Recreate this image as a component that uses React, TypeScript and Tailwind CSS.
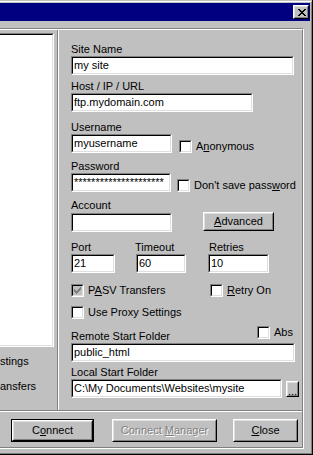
import React from "react"

// sunken 2px bevel used by edits, list boxes and check boxes
const sunkOuter = "border-t border-l border-b border-r border-t-[#808080] border-l-[#808080] border-b-white border-r-white"
const sunkInner = "border-t border-l border-b border-r border-t-black border-l-black border-b-[#dfdfdf] border-r-[#dfdfdf]"
const raisedOuter = "border-t border-l border-b border-r border-t-white border-l-white border-b-black border-r-black"
const raisedInner = "border-t border-l border-b border-r border-t-[#dfdfdf] border-l-[#dfdfdf] border-b-[#808080] border-r-[#808080]"

function Edit({ w, value }: { w: string; value?: string }) {
    return (
        <div className={`${w} h-[19px] shrink-0 ${sunkOuter}`}>
            <div className={`h-full bg-white flex items-center pl-px overflow-hidden whitespace-nowrap ${sunkInner}`}>
                {value}
            </div>
        </div>
    )
}

function CheckBox({ label, checked, disabled }: { label: React.ReactNode; checked?: boolean; disabled?: boolean }) {
    return (
        <div className="flex items-center gap-[4px] whitespace-nowrap">
            <div className={`w-[13px] h-[13px] shrink-0 ${sunkOuter}`}>
                <div className={`h-full flex items-center justify-center ${sunkInner} ${disabled ? "bg-[#c0c0c0]" : "bg-white"}`}>
                    {checked && (
                        <svg width="7" height="7" viewBox="0 0 7 7" shapeRendering="crispEdges">
                            <path
                                fill={disabled ? "#808080" : "#000"}
                                d="M6 0h1v1H6zM5 1h2v1H5zM0 2h1v1H0zM4 2h3v1H4zM0 3h2v1H0zM3 3h3v1H3zM0 4h5v1H0zM1 5h3v1H1zM2 6h1v1H2z"
                            />
                        </svg>
                    )}
                </div>
            </div>
            <span>{label}</span>
        </div>
    )
}

function Btn({ className, children, disabled }: { className: string; children: React.ReactNode; disabled?: boolean }) {
    return (
        <div className={`${className} shrink-0 ${raisedOuter}`}>
            <div className={`h-full flex items-center justify-center whitespace-nowrap ${raisedInner}`}>
                <span className={disabled ? "text-[#808080] [text-shadow:1px_1px_0_#fff]" : ""}>{children}</span>
            </div>
        </div>
    )
}

function CloseBox() {
    return (
        <div className={`w-[16px] h-[14px] bg-[#c0c0c0] ${raisedOuter}`}>
            <div className={`h-full flex items-center justify-center pl-px ${raisedInner}`}>
                <svg width="8" height="7" viewBox="0 0 8 7" shapeRendering="crispEdges">
                    <path
                        fill="#000"
                        d="M0 0h2v1H0zM6 0h2v1H6zM1 1h2v1H1zM5 1h2v1H5zM2 2h4v1H2zM3 3h2v1H3zM2 4h4v1H2zM1 5h2v1H1zM5 5h2v1H5zM0 6h2v1H0zM6 6h2v1H6z"
                    />
                </svg>
            </div>
        </div>
    )
}

const u = (c: string) => <span className="underline underline-offset-[1px]">{c}</span>

export default function App() {
    return (
        <div className="w-[313px] h-[455px] overflow-hidden bg-[#c0c0c0] border-r border-b border-r-black border-b-black pt-px font-['Liberation_Sans',Arial,sans-serif] text-[11px] leading-[13px] text-black">
            <div className="h-full flex flex-col border-t border-r border-b border-t-white border-r-[#808080] border-b-[#808080] pt-px pr-px">
                {/* title bar */}
                <div className="h-[18px] shrink-0 bg-[#000080] flex items-center justify-end pr-px">
                    <CloseBox />
                </div>

                <div className="flex-1 flex flex-col pt-[7px] pr-[6px] pb-[4px]">
                    <div className="flex-1 flex flex-col border-t border-r border-b border-t-[#808080] border-r-white border-b-white">
                        <div className="flex-1 flex flex-col border-t border-r border-b border-t-white border-r-[#808080] border-b-[#808080]">
                            <div className="flex-1 flex">
                                {/* left pane */}
                                <div className="w-[57px] shrink-0 pt-[3px] flex flex-col">
                                    <div className="w-[54px] h-[314px] border-t border-r border-b border-t-[#808080] border-r-white border-b-white">
                                        <div className="h-full bg-white border-t border-r border-b border-t-black border-r-[#dfdfdf] border-b-[#dfdfdf]" />
                                    </div>
                                    <div className="mt-[8px] whitespace-nowrap">stings</div>
                                    <div className="mt-[12px] whitespace-nowrap">ansfers</div>
                                </div>
                                <div className="w-[2px] shrink-0 border-l border-r border-l-[#808080] border-r-white" />

                                {/* site properties */}
                                <div className="flex-1 flex flex-col pl-[12px] pt-[13px]">
                                    <div>Site Name</div>
                                    <Edit w="w-[223px]" value="my site" />

                                    <div className="mt-[5px]">Host / IP / URL</div>
                                    <Edit w="w-[182px]" value="ftp.mydomain.com" />

                                    <div className="mt-[9px]">Username</div>
                                    <div className="flex items-end">
                                        <Edit w="w-[101px]" value="myusername" />
                                        <div className="ml-[7px]">
                                            <CheckBox label={<>A{u("n")}onymous</>} />
                                        </div>
                                    </div>

                                    <div className="mt-[7px]">Password</div>
                                    <div className="flex items-end">
                                        <Edit w="w-[100px]" value="*********************" />
                                        <div className="ml-[6px]">
                                            <CheckBox label={<>Don't save pass{u("w")}ord</>} />
                                        </div>
                                    </div>

                                    <div className="mt-[7px]">Account</div>
                                    <div className="flex items-end">
                                        <Edit w="w-[101px]" />
                                        <Btn className="w-[71px] h-[19px] ml-[31px] mb-px">
                                            {u("A")}dvanced
                                        </Btn>
                                    </div>

                                    <div className="mt-[9px] flex">
                                        <div className="w-[65px] flex flex-col">
                                            <div>Port</div>
                                            <Edit w="w-[44px]" value="21" />
                                        </div>
                                        <div className="w-[72px] flex flex-col">
                                            <div className="-ml-px">Timeout</div>
                                            <Edit w="w-[50px]" value="60" />
                                        </div>
                                        <div className="flex flex-col">
                                            <div className="ml-px">Retries</div>
                                            <Edit w="w-[61px]" value="10" />
                                        </div>
                                    </div>

                                    <div className="mt-[11px] flex">
                                        <div className="w-[139px]">
                                            <CheckBox label={<>P{u("A")}SV Transfers</>} checked disabled />
                                        </div>
                                        <CheckBox label={<>{u("R")}etry On</>} />
                                    </div>

                                    <div className="mt-[9px] flex">
                                        <CheckBox label="Use Proxy Settings" />
                                    </div>

                                    <div className="mt-[7px] w-[224px] flex items-start justify-between">
                                        <div className="mt-[4px]">Remote Start Folder</div>
                                        <div className="mr-[2px]">
                                            <CheckBox label="Abs" />
                                        </div>
                                    </div>
                                    <Edit w="w-[224px]" value="public_html" />

                                    <div className="mt-[4px]">Local Start Folder</div>
                                    <div className="flex items-start">
                                        <Edit w="w-[211px]" value={"C:\\My Documents\\Websites\\mysite"} />
                                        <Btn className="w-[13px] h-[16px] ml-[4px] mt-[2px]">
                                            <span className="block leading-[10px] pt-[3px]">...</span>
                                        </Btn>
                                    </div>
                                </div>
                            </div>

                            <div className="h-[2px] shrink-0 border-t border-b border-t-[#808080] border-b-white" />

                            {/* dialog buttons */}
                            <div className="h-[35px] shrink-0 flex items-start pt-[7px] pl-[11px]">
                                <div className="w-[83px] h-[23px] border border-black">
                                    <Btn className="w-full h-full">C{u("o")}nnect</Btn>
                                </div>
                                <Btn className="w-[105px] h-[23px] ml-[18px]" disabled>
                                    Connect {u("M")}anager
                                </Btn>
                                <Btn className="w-[65px] h-[23px] ml-[16px]">{u("C")}lose</Btn>
                            </div>
                        </div>
                    </div>
                </div>
            </div>
        </div>
    )
}
